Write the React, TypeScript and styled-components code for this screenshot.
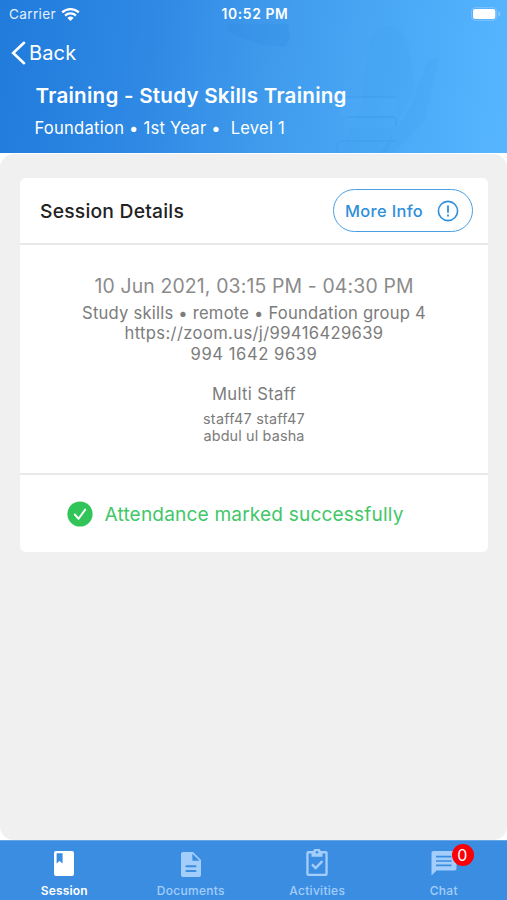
import React from 'react';
import styled, { createGlobalStyle } from 'styled-components';

const GlobalStyle = createGlobalStyle`
  * { box-sizing: border-box; }
  body { margin: 0; font-family: Inter, sans-serif; }
`;

const Screen = styled.div`
  width: 507px;
  height: 900px;
  display: flex;
  flex-direction: column;
  overflow: hidden;
  background: #fff;
`;

const Header = styled.header`
  position: relative;
  height: 153px;
  flex: none;
  color: #fff;
  background: linear-gradient(97deg, #217bdb 0%, #2c86e3 25%, #3f9aec 52%, #4aa9f7 76%, #57b6ff 100%);
`;

const Artwork = styled.svg`
  position: absolute;
  top: 0;
  left: 0;
`;

const HeaderContent = styled.div`
  position: relative;
`;

const StatusBar = styled.div`
  height: 28px;
  padding: 0 6px 0 9px;
  display: grid;
  grid-template-columns: 1fr auto 1fr;
  align-items: center;
  font-size: 13.8px;
  line-height: 28px;
`;

const Carrier = styled.div`
  display: flex;
  align-items: center;
  gap: 5px;
  font-size: 13.6px;
  letter-spacing: 0.35px;
  color: #e3f0fd;
`;

const Clock = styled.div`
  font-weight: 600;
  letter-spacing: 0.65px;
`;

const Battery = styled.svg`
  justify-self: end;
`;

const BackButton = styled.div`
  height: 50px;
  padding-left: 11px;
  display: flex;
  align-items: center;
  gap: 3px;
  font-size: 20px;
  letter-spacing: 0.15px;
`;

const Title = styled.h1`
  margin: 5px 0 0 35.5px;
  font-size: 20.6px;
  line-height: 26px;
  font-weight: 600;
  letter-spacing: 0.24px;
`;

const Subtitle = styled.div`
  margin: 8px 0 0 34.5px;
  font-size: 16.6px;
  line-height: 22px;
  letter-spacing: 0.23px;
  white-space: pre;
`;

const Main = styled.main`
  flex: 1;
  margin-top: 1px;
  padding: 24px 19px 0 20px;
  border-radius: 14px;
  background: #f0f0f0;
`;

const Card = styled.section`
  height: 374px;
  display: flex;
  flex-direction: column;
  border-radius: 6px;
  background: #fff;
`;

const CardHeader = styled.div`
  height: 67px;
  padding: 0 15px 0 20px;
  display: flex;
  align-items: center;
  justify-content: space-between;
  border-bottom: 2px solid #e9e9e9;
`;

const CardTitle = styled.h2`
  margin: 1px 0 0;
  font-size: 19.3px;
  font-weight: 500;
  letter-spacing: 0.22px;
  color: #222;
`;

const InfoButton = styled.button`
  width: 140px;
  height: 43px;
  margin-top: 0;
  padding: 0 13px 0 11px;
  display: flex;
  align-items: center;
  justify-content: space-between;
  border: 1.5px solid #4a9fe2;
  border-radius: 22px;
  background: #fff;
  font: 500 16.4px Inter, sans-serif;
  letter-spacing: 0.36px;
  color: #2e8fdb;
`;

const Details = styled.div`
  height: 230px;
  padding-top: 28px;
  border-bottom: 2px solid #e9e9e9;
  text-align: center;
  color: #7c7c7c;
`;

const Line = styled.div<{ $size: number; $height: number; $spacing: number; $gap?: number; $color?: string }>`
  margin-top: ${(p) => p.$gap ?? 0}px;
  font-size: ${(p) => p.$size}px;
  line-height: ${(p) => p.$height}px;
  letter-spacing: ${(p) => p.$spacing}px;
  color: ${(p) => p.$color ?? 'inherit'};
`;

const Attendance = styled.div`
  flex: 1;
  padding-left: 47px;
  display: flex;
  align-items: center;
  gap: 11.5px;
  font-size: 19.1px;
  letter-spacing: 0.16px;
  color: #42c768;
`;

const TabBar = styled.nav`
  height: 60px;
  flex: none;
  display: grid;
  grid-template-columns: repeat(4, 126.5px);
  border-top: 1px solid #66a5e6;
  background: #3b8de1;
`;

const Tab = styled.div<{ $active?: boolean }>`
  position: relative;
  padding: 8px 0 0 2px;
  display: flex;
  flex-direction: column;
  align-items: center;
  font-size: 12px;
  line-height: 16px;
  font-weight: ${(p) => (p.$active ? 600 : 500)};
  letter-spacing: ${(p) => (p.$active ? 0.15 : 0.28)}px;
  color: ${(p) => (p.$active ? '#fff' : '#a3cdfb')};
`;

const TabIcon = styled.svg`
  height: 30px;
  margin-bottom: 4px;
`;

const Badge = styled.span`
  position: absolute;
  top: 3px;
  left: 72px;
  width: 22px;
  height: 22px;
  border-radius: 50%;
  background: #fb0007;
  color: #fff;
  font-size: 16px;
  font-weight: 400;
  line-height: 22px;
  text-align: center;
`;

export default function App() {
  return (
    <Screen>
      <GlobalStyle />
      <Header>
        <Artwork width="507" height="153" viewBox="0 0 507 153">
          <path d="M228 24h60l2 14-5 9-24-2-33-13z" fill="#2c8de0" opacity=".25" />
          <path d="M368 48q5-22 22-22 16 0 20 26l5 38-20 38-8 25h-48l22-45z" fill="#2c98ee" opacity=".09" />
          <path d="M410 108l18-48 12-4-16 66-30 31h-14z" fill="#218ee8" opacity=".08" />
          <g fill="none" stroke="#2389df" opacity=".28">
            <path d="M339 97h56M348 117h46q4 5 1 10M337 153v-7q1-5 6-5h54" />
          </g>
          <path d="M340 99h56v17h-56zM344 119h51v9h-51z" fill="#58b6ff" opacity=".16" />
        </Artwork>
        <HeaderContent>
          <StatusBar>
            <Carrier>
              Carrier
              <svg width="19" height="15" viewBox="0 0 19 15">
                <path d="M1.2 5.4a12 12 0 0 1 16.6 0M4.1 8.6a7.8 7.8 0 0 1 10.8 0" fill="none" stroke="#fff" strokeWidth="2.3" />
                <path d="M9.5 14L6.4 10.9a4.5 4.5 0 0 1 6.2 0z" fill="#fff" />
              </svg>
            </Carrier>
            <Clock>10:52 PM</Clock>
            <Battery width="30" height="14" viewBox="0 0 30 14">
              <rect x=".6" y=".6" width="25" height="12.8" rx="3.6" fill="none" stroke="#7cc2ff" />
              <rect x="2" y="2" width="22.3" height="10" rx="2.2" fill="#fff" />
              <path d="M27.4 4.6q2 .8 2 2.4t-2 2.4z" fill="#8bcaff" />
            </Battery>
          </StatusBar>
          <BackButton>
            <svg width="15" height="24" viewBox="0 0 15 24">
              <path d="M13 1.8L2.2 12 13 22.2" fill="none" stroke="#fff" strokeWidth="2.6" strokeLinecap="round" />
            </svg>
            Back
          </BackButton>
          <Title>Training - Study Skills Training</Title>
          <Subtitle>{'Foundation • 1st Year •  Level 1'}</Subtitle>
        </HeaderContent>
      </Header>
      <Main>
        <Card>
          <CardHeader>
            <CardTitle>Session Details</CardTitle>
            <InfoButton>
              More Info
              <svg width="22" height="22" viewBox="0 0 22 22" fill="none" stroke="#2e8fdb">
                <circle cx="11" cy="11" r="9.6" strokeWidth="1.6" />
                <path d="M11 5.5v7.3M11 14.6v1.9" strokeWidth="1.8" />
              </svg>
            </InfoButton>
          </CardHeader>
          <Details>
            <Line $size={19.4} $height={26} $spacing={0.15} $color="#8b8b8b">10 Jun 2021, 03:15 PM - 04:30 PM</Line>
            <Line $size={16.6} $height={20.3} $spacing={0.22} $gap={4}>Study skills • remote • Foundation group 4</Line>
            <Line $size={16.6} $height={20.3} $spacing={0.36}>https://zoom.us/j/99416429639</Line>
            <Line $size={16.6} $height={20.3} $spacing={0.56}>994 1642 9639</Line>
            <Line $size={16.6} $height={20} $spacing={0.34} $gap={20}>Multi Staff</Line>
            <Line $size={14.4} $height={17} $spacing={0.25} $gap={6}>staff47 staff47</Line>
            <Line $size={14.4} $height={17} $spacing={0.15}>abdul ul basha</Line>
          </Details>
          <Attendance>
            <svg width="26" height="26" viewBox="0 0 26 26">
              <circle cx="13" cy="13" r="12.6" fill="#31c559" />
              <path d="M7.8 13.5l3.8 4.3L18.2 8.6" fill="none" stroke="#fff" strokeWidth="1.9" strokeLinecap="round" strokeLinejoin="round" />
            </svg>
            Attendance marked successfully
          </Attendance>
        </Card>
      </Main>
      <TabBar>
        <Tab $active>
          <TabIcon width="22" viewBox="0 0 22 30">
            <path fillRule="evenodd" d="M3 2h16q2 0 2 2v21q0 2-2 2H3q-2 0-2-2V4q0-2 2-2zM3.6 4.3v10.2l3-2.4 3 2.4V4.3z" fill="#fff" />
          </TabIcon>
          Session
        </Tab>
        <Tab>
          <TabIcon width="22" viewBox="0 0 22 30">
            <path d="M3 3h10l8 8v15q0 2-2 2H3q-2 0-2-2V5q0-2 2-2z" fill="#a3cdfb" />
            <path d="M12.4 4.7v7.1h7.1z" fill="#3b8de1" />
            <path d="M6.5 17.2h9M6.5 22h9" stroke="#3b8de1" strokeWidth="2.1" strokeLinecap="round" />
          </TabIcon>
          Documents
        </Tab>
        <Tab>
          <TabIcon width="24" viewBox="0 0 24 30">
            <path d="M3.3 2h17.4q2 0 2 2v21q0 2-2 2H3.3q-2 0-2-2V4q0-2 2-2zM3.6 4.4v20.300h16.800v-20.300h-2.900v3.400h-11v-3.400z" fillRule="evenodd" fill="#a3cdfb" />
            <path d="M8.300 2.500a3.700 3.100 0 0 1 7.400 0z" fill="#a3cdfb" />
            <circle cx="12" cy="3.200" r="1.300" fill="#3b8de1" />
            <path d="M7 15.300l3.600 3.800 6.800-7" fill="none" stroke="#a3cdfb" strokeWidth="2.400" />
          </TabIcon>
          Activities
        </Tab>
        <Tab>
          <TabIcon width="26" viewBox="0 0 26 30">
            <path d="M2.500 2h21q2 0 2 2v15.500q0 2-2 2H5.500L.5 26.500V4q0-2 2-2z" fill="#a3cdfb" />
            <path d="M5 7.700h15.500M5 12h15.500M5 16.300h15.500" stroke="#3b8de1" strokeWidth="1.700" />
          </TabIcon>
          Chat
          <Badge>0</Badge>
        </Tab>
      </TabBar>
    </Screen>
  );
}
